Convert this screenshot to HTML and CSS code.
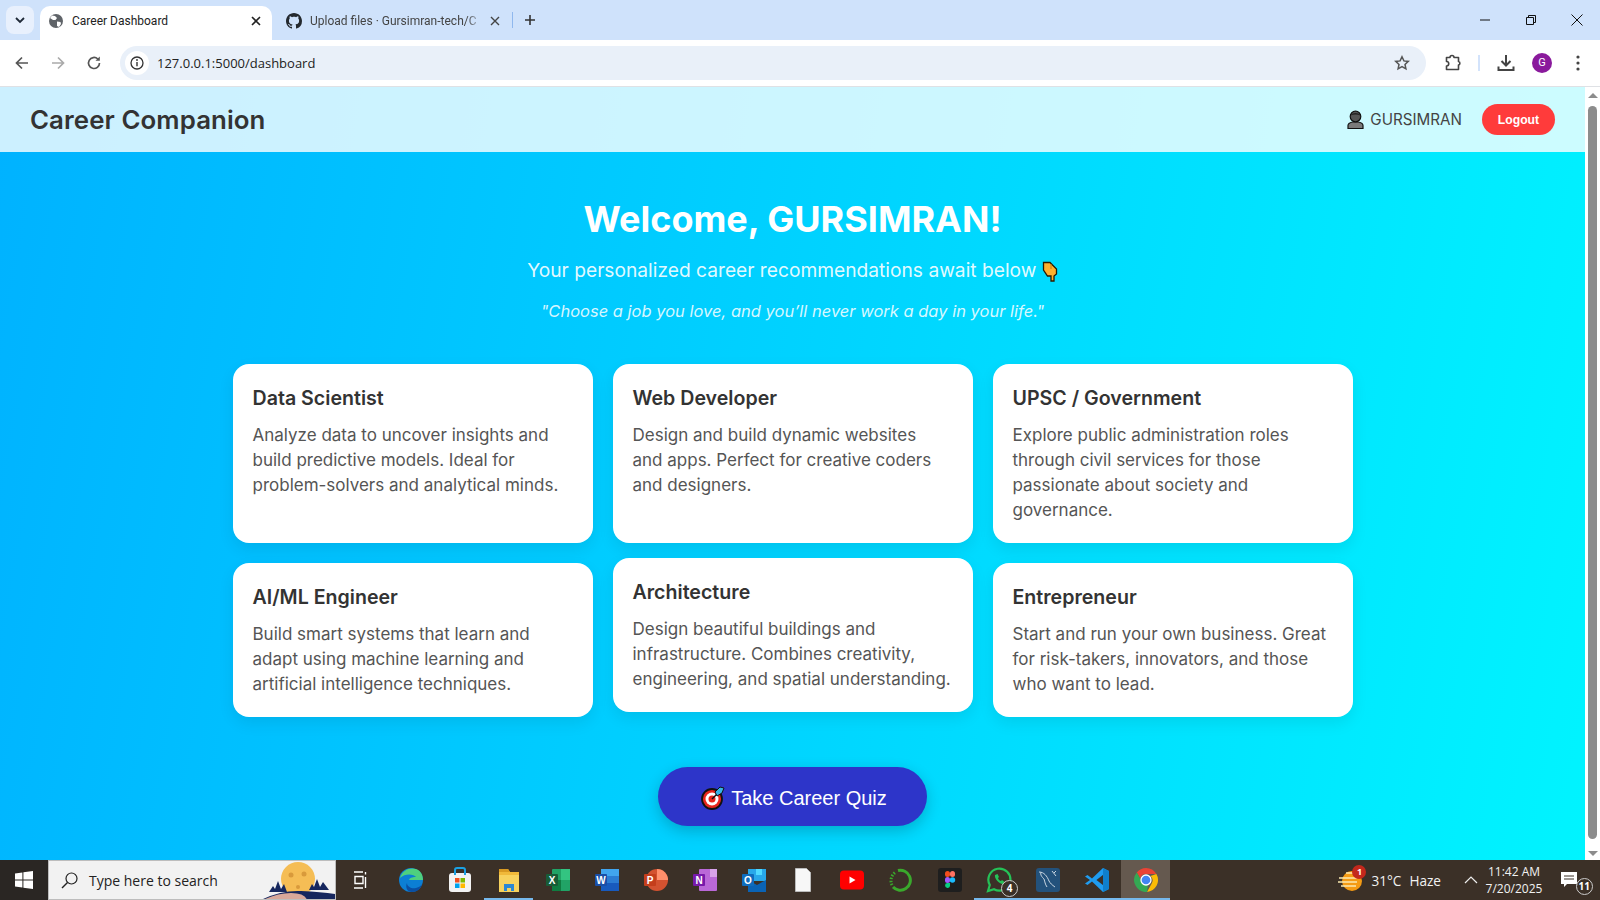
FILE: index.html
```html
<!DOCTYPE html>
<html lang="en">
<head>
    <meta charset="UTF-8">
    <meta name="viewport" content="width=device-width, initial-scale=1.0">
    <title>Career Dashboard</title>
    <link rel="stylesheet" href="styles.css">
</head>
<body>
    <div class="tabstrip">
        <div class="tabsearch">
            <svg width="12" height="12" viewBox="0 0 12 12"><path d="M2 4l4 4 4-4" fill="none" stroke="#1f2937" stroke-width="1.8"/></svg>
        </div>
        <div class="tab tab-active">
            <svg width="16" height="16" viewBox="0 0 16 16"><circle cx="8" cy="8" r="7" fill="#5f6368"/><path d="M4 2.500l3 .5 2 2-1.500 2L5 7 2 5zM9 8.500l3.500.5.500 2-2 3-2-1z" fill="#fff"/></svg>
            <span class="tab-title">Career Dashboard</span>
            <svg class="tab-close" width="10" height="10" viewBox="0 0 10 10"><path d="M1 1l8 8M9 1l-8 8" stroke="#222" stroke-width="1.6"/></svg>
        </div>
        <div class="tab tab-other">
            <svg width="16" height="16" viewBox="0 0 16 16"><path fill="#24292f" d="M8 0C3.580 0 0 3.580 0 8c0 3.540 2.290 6.530 5.470 7.590.4.070.550-.170.550-.380 0-.190-.010-.820-.010-1.490-2.010.370-2.530-.490-2.690-.940-.090-.230-.480-.940-.820-1.130-.280-.150-.680-.520-.010-.530.630-.010 1.080.580 1.230.820.720 1.210 1.870.870 2.330.660.070-.520.280-.870.510-1.070-1.780-.2-3.640-.890-3.640-3.950 0-.870.310-1.590.820-2.150-.080-.2-.360-1.020.080-2.120 0 0 .670-.210 2.200.820.640-.180 1.320-.270 2-.270.680 0 1.360.090 2 .270 1.530-1.040 2.200-.820 2.200-.820.440 1.100.160 1.920.080 2.120.510.560.820 1.270.820 2.150 0 3.070-1.870 3.750-3.650 3.950.290.250.540.730.540 1.480 0 1.070-.010 1.930-.010 2.200 0 .210.150.460.550.380A8.013 8.013 0 0016 8c0-4.420-3.580-8-8-8z"/></svg>
            <span class="tab-title tab-fade">Upload files · Gursimran-tech/C</span>
            <svg class="tab-close" width="10" height="10" viewBox="0 0 10 10"><path d="M1 1l8 8M9 1l-8 8" stroke="#444" stroke-width="1.4"/></svg>
        </div>
        <div class="tab-sep"></div>
        <svg class="newtab" width="12" height="12" viewBox="0 0 12 12"><path d="M6 1v10M1 6h10" stroke="#333" stroke-width="1.6"/></svg>
        <div class="winctl">
            <svg width="12" height="12" viewBox="0 0 12 12"><path d="M1 6h10" stroke="#111" stroke-width="1"/></svg>
            <svg width="12" height="12" viewBox="0 0 12 12"><path d="M1.500 3.500h7v7h-7zM3.500 3.500v-2h7v7h-2" fill="none" stroke="#111" stroke-width="1"/></svg>
            <svg width="12" height="12" viewBox="0 0 12 12"><path d="M.5.5l11 11M11.500.5l-11 11" stroke="#111" stroke-width="1"/></svg>
        </div>
    </div>

    <div class="toolbar">
        <svg class="nav-btn" width="16" height="16" viewBox="0 0 16 16"><path d="M14 8H3M8 2.500L2.500 8 8 13.500" fill="none" stroke="#555" stroke-width="1.700"/></svg>
        <svg class="nav-btn" width="16" height="16" viewBox="0 0 16 16"><path d="M2 8h11M8 2.500L13.500 8 8 13.500" fill="none" stroke="#aaa" stroke-width="1.700"/></svg>
        <svg class="nav-btn" width="16" height="16" viewBox="0 0 16 16"><path d="M13.500 8A5.500 5.500 0 1 1 11.800 4" fill="none" stroke="#555" stroke-width="1.700"/><path d="M13.800 1.500v4.300H9.500z" fill="#555"/></svg>
        <div class="omnibox">
            <span class="site-info">
                <svg width="14" height="14" viewBox="0 0 14 14"><circle cx="7" cy="7" r="6" fill="none" stroke="#333" stroke-width="1.300"/><path d="M7 6v4.200" stroke="#333" stroke-width="1.400"/><circle cx="7" cy="4" r=".9" fill="#333"/></svg>
            </span>
            <span class="url">127.0.0.1:5000/dashboard</span>
            <svg class="star" width="16" height="16" viewBox="0 0 16 16"><path d="M8 1.800l1.900 4.100 4.400.5-3.300 3 .9 4.400L8 11.600l-3.900 2.200.9-4.400-3.300-3 4.400-.5z" fill="none" stroke="#555" stroke-width="1.500"/></svg>
        </div>
        <svg class="tool-puzzle" width="18" height="18" viewBox="0 0 18 18"><path d="M2.500 3.500h3.500a2 2 0 0 1 4 0h4.500v4a1.800 1.800 0 0 1 0 3.500v4.500h-12v-3.500a2 2 0 0 0 0-4.500z" fill="none" stroke="#444" stroke-width="1.600" stroke-linejoin="round"/></svg>
        <div class="tool-sep"></div>
        <svg class="tool-dl" width="18" height="18" viewBox="0 0 18 18"><path d="M9 1v10M4.500 7L9 11.500 13.500 7" fill="none" stroke="#444" stroke-width="2"/><path d="M1.500 12.500v3.500h15v-3.500" fill="none" stroke="#444" stroke-width="2"/></svg>
        <div class="avatar">G</div>
        <svg class="tool-menu" width="4" height="16" viewBox="0 0 4 16"><circle cx="2" cy="2" r="1.600" fill="#444"/><circle cx="2" cy="8" r="1.600" fill="#444"/><circle cx="2" cy="14" r="1.600" fill="#444"/></svg>
    </div>

    <div class="viewport">
        <div class="page">
            <header class="navbar">
                <div class="brand">Career Companion</div>
                <div class="user">
                    <svg width="17" height="19" viewBox="0 0 17 19"><path d="M1 18.500v-3c0-1.800 2-3 4.500-3.500h6c2.500.5 4.500 1.700 4.500 3.500v3z" fill="#7a7a7a" stroke="#111" stroke-width="1.200"/><circle cx="8.500" cy="6.500" r="5.300" fill="#555" stroke="#111" stroke-width="1.200"/><path d="M3.500 5.500c1-3.500 9-3.500 10 0-3-1.500-7-1.500-10 0z" fill="#222"/></svg>
                    <span>GURSIMRAN</span>
                </div>
                <button class="logout">Logout</button>
            </header>
            <main class="content">
                <h1>Welcome, GURSIMRAN!</h1>
                <p class="subtitle">Your personalized career recommendations await below
                    <svg class="hand" width="16" height="21" viewBox="0 0 16 21"><path d="M1.500 1.500H8L14.500 8v5L12 15v5H9v-5H5.500L1.500 9z" fill="#ffb02e" stroke="#2b1a00" stroke-width="1.300"/><path d="M9 3v5" stroke="#c97a10" stroke-width="1"/></svg>
                </p>
                <p class="quote">"Choose a job you love, and you’ll never work a day in your life."</p>

                <section class="cards">
                    <article class="card">
                        <h3>Data Scientist</h3>
                        <p>Analyze data to uncover insights and build predictive models. Ideal for problem-solvers and analytical minds.</p>
                    </article>
                    <article class="card">
                        <h3>Web Developer</h3>
                        <p>Design and build dynamic websites<br>and apps. Perfect for creative coders and designers.</p>
                    </article>
                    <article class="card">
                        <h3>UPSC / Government</h3>
                        <p>Explore public administration roles through civil services for those passionate about society and governance.</p>
                    </article>
                    <article class="card">
                        <h3>AI/ML Engineer</h3>
                        <p>Build smart systems that learn and adapt using machine learning and artificial intelligence techniques.</p>
                    </article>
                    <article class="card card-hover">
                        <h3>Architecture</h3>
                        <p>Design beautiful buildings and infrastructure. Combines creativity, engineering, and spatial understanding.</p>
                    </article>
                    <article class="card">
                        <h3>Entrepreneur</h3>
                        <p>Start and run your own business. Great for risk-takers, innovators, and those who want to lead.</p>
                    </article>
                </section>

                <button class="quiz">
                    <svg width="24" height="24" viewBox="0 0 24 24"><circle cx="11" cy="13" r="10" fill="#e8261c" stroke="#111" stroke-width="1.800"/><circle cx="11" cy="13" r="6.500" fill="#fff"/><circle cx="11" cy="13" r="3.500" fill="#e8261c"/><path d="M11 13L18 6" stroke="#111" stroke-width="1.500"/><path d="M14 6l5-5 4 1-2 5-5 3z" fill="#35b6ea" stroke="#111" stroke-width="1"/></svg>
                    <span>Take Career Quiz</span>
                </button>
            </main>
        </div>
        <div class="scrollbar">
            <span class="arrow arrow-up"></span>
            <span class="thumb"></span>
            <span class="arrow arrow-down"></span>
        </div>
    </div>

    <footer class="taskbar">
        <div class="start">
            <svg width="18" height="18" viewBox="0 0 18 18"><path d="M0 2.500l7.400-1v7H0zM8.400 1.300L18 0v8.500H8.400zM0 9.500h7.400v7l-7.400-1zM8.400 9.500H18V18l-9.600-1.300z" fill="#fff"/></svg>
        </div>
        <div class="search">
            <svg width="17" height="17" viewBox="0 0 17 17"><circle cx="10.500" cy="6.500" r="5.500" fill="none" stroke="#222" stroke-width="1.200"/><path d="M6.500 10.500L1 16" stroke="#222" stroke-width="1.400"/></svg>
            <span>Type here to search</span>
            <svg class="search-art" width="74" height="38" viewBox="0 0 74 38"><circle cx="37" cy="17" r="17" fill="#f5bd55"/><circle cx="30" cy="13" r="2.500" fill="#d99a3b"/><circle cx="43" cy="12" r="2.500" fill="#d99a3b"/><circle cx="37" cy="25" r="2" fill="#d99a3b"/><path d="M8 30l4-6 2 3 3-8 3 8 3-5 3 8zM48 28l3-6 2 3 3-8 3 8 3-5 6 8z" fill="#16275e"/><path d="M0 38q20-10 40-9t34 3v6z" fill="#16275e"/><path d="M2 38q14-7 28-7t16 7z" fill="#d8a89a"/></svg>
        </div>
        <div class="taskview">
            <svg width="16" height="18" viewBox="0 0 16 18"><path d="M2 1h9M3 5.500h8v7H3zM2 17h9M13.500 1v2.500M13.500 6v11" fill="none" stroke="#fff" stroke-width="1.400"/></svg>
        </div>
        <div class="apps">
            <div class="app">
                <svg width="26" height="26" viewBox="0 0 26 26"><circle cx="13" cy="13" r="12" fill="#0c7fd4"/><path d="M2 11C4 3 12 0 18 2c5 2 7 6 7 11H11c1-3 5-3 7-3-2-3-11-4-16 1z" fill="#4ed07f"/><path d="M14 25c-5 0-7-5-5-9 0 4 5 6 9 5 3-1 5-2 6-4-1 5-5 8-10 8z" fill="#0a4fa3"/></svg>
            </div>
            <div class="app">
                <svg width="24" height="26" viewBox="0 0 24 26"><rect x="1" y="6" width="22" height="19" rx="3" fill="#f3f3f3"/><path d="M7 8V3a2 2 0 0 1 2-2h6a2 2 0 0 1 2 2v5" fill="none" stroke="#1ba1e2" stroke-width="2"/><rect x="7" y="11" width="4.500" height="4.500" fill="#f25022"/><rect x="12.500" y="11" width="4.500" height="4.500" fill="#7fba00"/><rect x="7" y="16.500" width="4.500" height="4.500" fill="#00a4ef"/><rect x="12.500" y="16.500" width="4.500" height="4.500" fill="#ffb900"/></svg>
            </div>
            <div class="app app-open">
                <svg width="24" height="24" viewBox="0 0 24 24"><path d="M2 1h9l2 3h9v20H2z" fill="#f0b93a"/><path d="M2 1h9l2 3H2z" fill="#d99a22"/><path d="M2 7h20v17H2z" fill="#f7d25e"/><path d="M7 23v-7h10v7h-3v-3h-4v3z" fill="#2b87d3"/></svg>
            </div>
            <div class="app">
                <svg width="24" height="24" viewBox="0 0 24 24"><rect x="6" y="1" width="18" height="22" rx="1" fill="#21a366"/><rect x="15" y="1" width="9" height="11" fill="#33c481"/><rect x="6" y="12" width="9" height="11" fill="#107c41"/><rect x="0" y="6" width="12" height="12" rx="1" fill="#185c37"/><text x="6" y="16" class="tile-letter" text-anchor="middle">X</text></svg>
            </div>
            <div class="app">
                <svg width="24" height="24" viewBox="0 0 24 24"><rect x="6" y="1" width="18" height="22" rx="1" fill="#2b7cd3"/><rect x="6" y="1" width="18" height="7" fill="#41a5ee"/><rect x="6" y="15" width="18" height="8" fill="#185abd"/><rect x="0" y="6" width="12" height="12" rx="1" fill="#1a4fa8"/><text x="6" y="16" class="tile-letter" text-anchor="middle">W</text></svg>
            </div>
            <div class="app">
                <svg width="24" height="24" viewBox="0 0 24 24"><circle cx="13" cy="12" r="11" fill="#d35230"/><path d="M13 1a11 11 0 0 1 11 11H13z" fill="#ff8f6b"/><rect x="0" y="6" width="12" height="12" rx="1" fill="#c43e1c"/><text x="6" y="16" class="tile-letter" text-anchor="middle">P</text></svg>
            </div>
            <div class="app">
                <svg width="24" height="24" viewBox="0 0 24 24"><rect x="6" y="1" width="18" height="22" rx="1" fill="#ba68d8"/><rect x="17" y="1" width="7" height="8" fill="#d8a2ea"/><rect x="0" y="6" width="12" height="12" rx="1" fill="#7719aa"/><text x="6" y="16" class="tile-letter" text-anchor="middle">N</text></svg>
            </div>
            <div class="app">
                <svg width="24" height="24" viewBox="0 0 24 24"><rect x="6" y="1" width="18" height="12" fill="#28a8ea"/><rect x="14" y="1" width="6" height="6" fill="#50d9ff"/><path d="M6 12l9 5 9-5v12H6z" fill="#0a63b5"/><rect x="0" y="6" width="12" height="12" rx="1" fill="#0f6cbd"/><text x="6" y="16" class="tile-letter" text-anchor="middle">O</text></svg>
            </div>
            <div class="app">
                <svg width="16" height="24" viewBox="0 0 16 24"><path d="M.5.500h11l4 4v19H.5z" fill="#f7f7f7" stroke="#bbb" stroke-width="1"/></svg>
            </div>
            <div class="app">
                <svg width="24" height="20" viewBox="0 0 24 20"><rect width="24" height="19" y=".5" rx="4" fill="#f00"/><path d="M9.500 6.500v7l6-3.500z" fill="#fff"/></svg>
            </div>
            <div class="app">
                <svg width="24" height="24" viewBox="0 0 24 24"><path d="M9 2.500A10 10 0 1 1 4 19" fill="none" stroke="#3aa92c" stroke-width="3"/><path d="M3 17a10 10 0 0 1 4-13" fill="none" stroke="#3aa92c" stroke-width="3" stroke-dasharray="1.500 1.500"/></svg>
            </div>
            <div class="app">
                <svg width="24" height="24" viewBox="0 0 24 24"><rect width="24" height="24" rx="3" fill="#1e1e1e"/><rect x="7" y="3" width="5" height="6" rx="2.500" fill="#f24e1e"/><rect x="12" y="3" width="5" height="6" rx="2.500" fill="#ff7262"/><rect x="7" y="9" width="5" height="6" rx="2.500" fill="#a259ff"/><circle cx="14.500" cy="12" r="2.700" fill="#1abcfe"/><path d="M9.500 15H12v3a2.500 2.500 0 1 1-2.500-3z" fill="#0acf83"/></svg>
            </div>
            <div class="app app-open">
                <svg width="26" height="26" viewBox="0 0 26 26"><path d="M2 24l1.800-6A11 11 0 1 1 8 22.200z" fill="none" stroke="#25c257" stroke-width="2.200"/><path d="M9 8c-1 3 4 9 8 9l1.500-2-2.500-2-1 1c-1 0-3-2-3-3l1-1-1.500-3z" fill="#25c257"/></svg>
                <span class="count-badge">4</span>
            </div>
            <div class="app app-open">
                <svg width="24" height="26" viewBox="0 0 24 26"><rect y="1" width="24" height="24" rx="3" fill="#23527c"/><path d="M3 5c5 0 8 4 10 9 1 2 3 4 6 6M5 5c-1 3 1 5 3 7 1 3 1 5 3 8M16 4l4 5M20 4l-2 2" fill="none" stroke="#c9d6e2" stroke-width="1"/></svg>
            </div>
            <div class="app app-open">
                <svg width="24" height="26" viewBox="0 0 24 26"><path d="M18 1l6 3v18l-6 3L7 14.500 2.500 18 0 16.500 5 13 0 9.500 2.500 8 7 11.500z" fill="#1f9cf0"/><path d="M18 1l6 3v18l-6 3zM18 8l-6.500 5 6.500 5z" fill="#0f7fcc"/><path d="M18 8l-6.500 5 6.500 5z" fill="#3b3027"/></svg>
            </div>
            <div class="app app-open app-active">
                <svg width="24" height="24" viewBox="0 0 24 24"><path d="M12 0a12 12 0 0 1 10.400 6H12a6 6 0 0 0-5.800 4.400L2.800 4.500A12 12 0 0 1 12 0z" fill="#ea4335"/><path d="M22.400 6A12 12 0 0 1 13 24l4.700-8.500A6 6 0 0 0 16.500 8z" fill="#fbbc05"/><path d="M13 24A12 12 0 0 1 2.800 4.500L7.500 13a6 6 0 0 0 6.500 3.400z" fill="#34a853"/><circle cx="12" cy="12" r="5" fill="#4285f4" stroke="#fff" stroke-width="1.300"/></svg>
            </div>
        </div>
        <div class="tray">
            <div class="weather-icon">
                <svg width="24" height="24" viewBox="0 0 24 24"><circle cx="14" cy="13" r="10" fill="#f59b14"/><path d="M8 5h12M1 10h18M0 14h19M3 18h15" stroke="#fbe9b0" stroke-width="1.700"/></svg>
                <span class="alert-badge">1</span>
            </div>
            <span class="tray-text temp">31°C</span>
            <span class="tray-text">Haze</span>
            <svg class="chevron" width="14" height="8" viewBox="0 0 14 8"><path d="M1 7l6-6 6 6" fill="none" stroke="#eee" stroke-width="1.200"/></svg>
            <div class="clock"><span>11:42 AM</span><span>7/20/2025</span></div>
            <div class="notify">
                <svg width="16" height="16" viewBox="0 0 16 16"><path d="M0 1h16v12H6l-3 3v-3H0z" fill="#fff"/><path d="M3 5h10M3 8h10" stroke="#3b3027" stroke-width="1"/></svg>
                <span class="count-badge">11</span>
            </div>
        </div>
    </footer>
</body>
</html>
```

FILE: styles.css
```css
* { box-sizing: border-box; }

html, body {
    margin: 0;
    height: 100%;
    overflow: hidden;
}
body {
    display: flex;
    flex-direction: column;
    font-family: "Inter", "Open Sans", sans-serif;
}

/* browser chrome */
.tabstrip {
    height: 40px;
    flex: none;
    display: flex;
    align-items: flex-start;
    background: #cfe2fb;
    font-family: "Roboto", sans-serif;
}
.tabsearch {
    width: 28px;
    height: 28px;
    margin: 6px 0 0 6px;
    border-radius: 8px;
    background: #e8f0fd;
    display: flex;
    align-items: center;
    justify-content: center;
}
.tab {
    display: flex;
    align-items: center;
    height: 34px;
    margin-top: 6px;
    padding-bottom: 4px;
    font-size: 12px;
}
.tab-active {
    width: 232px;
    margin-left: 6px;
    padding-left: 8px;
    padding-right: 11px;
    background: #fff;
    border-radius: 10px 10px 0 0;
    color: #222;
}
.tab-other {
    width: 227px;
    margin-left: 14px;
    padding-right: 13px;
    color: #444;
}
.tab-title {
    flex: 1;
    margin-left: 8px;
    white-space: nowrap;
    overflow: hidden;
}
.tab-fade {
    margin-left: 8px;
    mask-image: linear-gradient(to right, #000 92%, rgba(0, 0, 0, 0.2));
}
.tab-close { flex: none; margin-left: 10px; }
.tab-sep {
    width: 1px;
    height: 16px;
    margin: 12px 0 0 -1px;
    background: #8fb8ee;
}
.newtab { margin: 14px 0 0 11px; }
.winctl {
    margin: 14px 17px 0 auto;
    display: flex;
    gap: 34px;
}

.toolbar {
    height: 47px;
    flex: none;
    display: flex;
    align-items: center;
    padding: 0 0 1px 14px;
    background: #fff;
    border-bottom: 1px solid #dfe1e5;
    border-radius: 10px 10px 0 0;
}
.nav-btn { margin-right: 20px; }
.omnibox {
    width: 1306px;
    height: 34px;
    margin-left: -2px;
    padding: 0 16px 0 5px;
    display: flex;
    align-items: center;
    border-radius: 17px;
    background: #e9f0f9;
}
.site-info {
    width: 24px;
    height: 24px;
    border-radius: 50%;
    background: #fff;
    display: flex;
    align-items: center;
    justify-content: center;
}
.url {
    flex: 1;
    margin-left: 8px;
    font-family: "Open Sans", sans-serif;
    font-size: 13px;
    color: #222;
}
.tool-puzzle { margin-left: 18px; }
.tool-sep {
    width: 2px;
    height: 16px;
    margin-left: 16px;
    background: #d3e3fb;
}
.tool-dl { margin-left: 17px; }
.avatar {
    width: 20px;
    height: 20px;
    margin-left: 17px;
    border-radius: 50%;
    background: #8a1a9c;
    color: #fff;
    font-family: "Roboto", sans-serif;
    font-size: 11px;
    line-height: 20px;
    text-align: center;
}
.tool-menu { margin-left: 24px; }

/* page */
.viewport {
    flex: 1;
    display: flex;
    min-height: 0;
}
.page {
    flex: 1;
    background: linear-gradient(100deg, #00b2ff, #00f4ff);
}
.navbar {
    height: 65px;
    display: flex;
    align-items: center;
    padding: 0 30px;
    background: rgba(255, 255, 255, 0.8);
}
.brand {
    font-size: 25.800px;
    font-weight: 600;
    color: #333;
    letter-spacing: 0.1px;
}
.user {
    margin-left: auto;
    display: flex;
    align-items: center;
    gap: 6px;
    font-size: 15.200px;
    color: #444;
}
.logout {
    width: 73px;
    height: 31px;
    margin-left: 20px;
    border: none;
    border-radius: 16px;
    background: #ff3b3b;
    color: #fff;
    font-family: "Liberation Sans", sans-serif;
    font-size: 12.200px;
    font-weight: 700;
}

.content {
    padding-top: 40px;
    text-align: center;
    color: #fff;
}
h1 {
    margin: 0 0 10px;
    font-size: 36px;
    line-height: 54px;
    font-weight: 700;
}
.subtitle {
    margin: 0 0 14px;
    font-size: 19.200px;
    line-height: 28px;
    color: rgba(255, 255, 255, 0.9);
}
.hand { vertical-align: -5px; }
.quote {
    margin: 0 0 40px;
    font-size: 16.500px;
    line-height: 26px;
    font-style: italic;
    color: rgba(255, 255, 255, 0.85);
}

.cards {
    display: grid;
    grid-template-columns: repeat(3, 360px);
    gap: 20px;
    justify-content: center;
    text-align: left;
}
.card {
    padding: 20px;
    background: #fff;
    border-radius: 16px;
    box-shadow: 0 6px 16px rgba(0, 0, 0, 0.08);
}
.card-hover {
    transform: translateY(-5px);
}
.card h3 {
    margin: 0 0 10px;
    font-size: 19.600px;
    line-height: 29px;
    font-weight: 600;
    color: #333;
}
.card p {
    margin: 0;
    font-size: 17px;
    line-height: 25px;
    color: #555;
}

.quiz {
    width: 269px;
    height: 59px;
    margin-top: 50px;
    padding: 3px 0 0 3px;
    display: inline-flex;
    align-items: center;
    justify-content: center;
    gap: 6px;
    border: none;
    border-radius: 30px;
    background: #2d35c9;
    color: #fff;
    font-family: "Liberation Sans", sans-serif;
    font-size: 20px;
    box-shadow: 0 5px 15px rgba(0, 0, 0, 0.2);
}

.scrollbar {
    width: 15px;
    flex: none;
    display: flex;
    flex-direction: column;
    align-items: center;
    background: #fff;
}
.arrow {
    width: 0;
    height: 0;
    border-left: 5px solid transparent;
    border-right: 5px solid transparent;
}
.arrow-up { margin-top: 6px; border-bottom: 5px solid #8c8c8c; }
.arrow-down { margin-top: 12px; border-top: 5px solid #8c8c8c; }
.thumb {
    width: 9px;
    height: 733px;
    margin-top: 8px;
    border-radius: 5px;
    background: #8c8c8c;
}

/* windows taskbar */
.taskbar {
    height: 40px;
    flex: none;
    display: flex;
    align-items: center;
    background: #3b3027;
    font-family: "Open Sans", sans-serif;
    color: #fff;
}
.start {
    width: 48px;
    height: 100%;
    display: flex;
    align-items: center;
    justify-content: center;
    background: #2a2623;
}
.search {
    width: 288px;
    height: 100%;
    padding-left: 12px;
    display: flex;
    align-items: center;
    gap: 11px;
    overflow: hidden;
    background: #f2f2f2;
    border: 1px solid #bdbdbd;
    font-size: 14px;
    color: #222;
}
.search-art { margin-left: auto; margin-top: 2px; flex: none; }
.taskview {
    width: 48px;
    margin-right: 2px;
    display: flex;
    justify-content: center;
}
.apps {
    display: flex;
    height: 100%;
    margin-right: auto;
}
.app {
    position: relative;
    width: 49px;
    height: 100%;
    display: flex;
    align-items: center;
    justify-content: center;
}
.app-open { box-shadow: inset 0 -2px 0 #76b9ed; background-clip: content-box; }
.app-active { background-color: #65594f; }
.tile-letter {
    font-family: "Liberation Sans", sans-serif;
    font-size: 10px;
    font-weight: 700;
    fill: #fff;
}
.count-badge {
    position: absolute;
    right: 5px;
    bottom: 3px;
    min-width: 17px;
    height: 17px;
    padding: 0 2px;
    border: 1px solid #ccc;
    border-radius: 9px;
    background: #3b3027;
    color: #fff;
    font-size: 10px;
    font-weight: 700;
    line-height: 15px;
    text-align: center;
}

.tray {
    display: flex;
    align-items: center;
    height: 100%;
    padding-right: 15px;
}
.weather-icon { position: relative; height: 24px; }
.alert-badge {
    position: absolute;
    top: -3px;
    right: -4px;
    width: 14px;
    height: 14px;
    border-radius: 50%;
    background: #c4281c;
    font-size: 9px;
    font-weight: 700;
    line-height: 14px;
    text-align: center;
}
.tray-text { font-size: 13.600px; color: #f2f2f2; margin-left: 8px; }
.temp { margin-left: 9px; }
.chevron { margin-left: 23px; }
.clock {
    width: 72px;
    display: flex;
    flex-direction: column;
    align-items: center;
    font-size: 12px;
    line-height: 17px;
    color: #f2f2f2;
}
.notify {
    position: relative;
    width: 24px;
    margin-left: 11px;
    height: 26px;
    padding-top: 3px;
}
.notify .count-badge { right: -8px; bottom: -2px; }
```
